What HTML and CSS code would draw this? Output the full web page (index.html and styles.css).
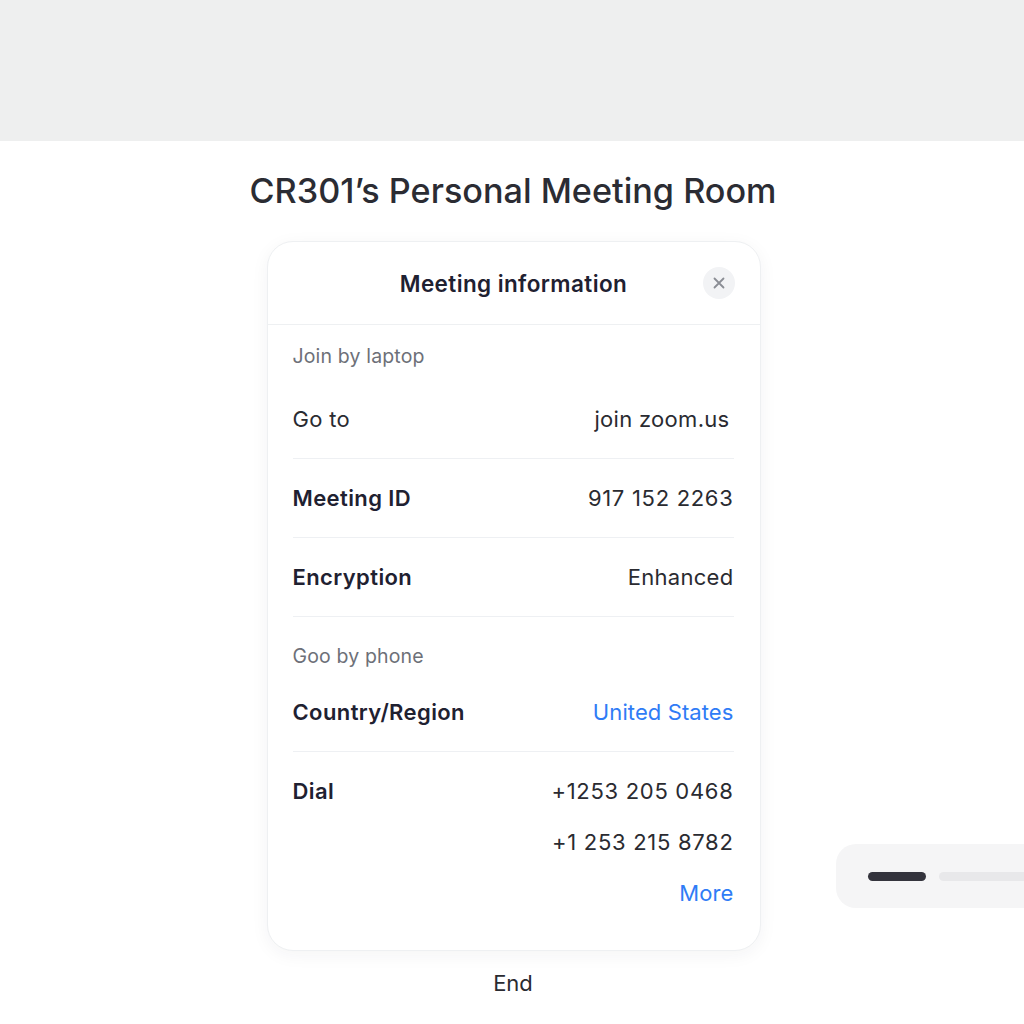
FILE: index.html
```html
<!DOCTYPE html>
<html lang="en">
<head>
<meta charset="utf-8">
<title>CR301's Personal Meeting Room</title>
<link rel="stylesheet" href="styles.css">
</head>
<body>
<div class="topbar"></div>
<main class="page">
  <h1 class="room-title">CR301’s Personal Meeting Room</h1>
  <section class="card">
    <header class="card-head">
      <h2 class="card-title">Meeting information</h2>
      <button class="close" aria-label="Close">
        <svg width="14" height="14" viewBox="0 0 14 14"><path d="M2.5 2.5 L11.5 11.5 M11.5 2.5 L2.5 11.5" stroke="#8a8d94" stroke-width="1.8" stroke-linecap="round"/></svg>
      </button>
    </header>
    <div class="card-body">
      <div class="label first">Join by laptop</div>
      <div class="row">
        <span class="key plain">Go to</span>
        <span class="val inset">join zoom.us</span>
      </div>
      <div class="row">
        <span class="key">Meeting ID</span>
        <span class="val num">917 152 2263</span>
      </div>
      <div class="row">
        <span class="key">Encryption</span>
        <span class="val">Enhanced</span>
      </div>
      <div class="label second">Goo by phone</div>
      <div class="row">
        <span class="key">Country/Region</span>
        <span class="val link">United States</span>
      </div>
      <div class="dial">
        <span class="key">Dial</span>
        <div class="numbers">
          <span class="val num">+1253 205 0468</span>
          <span class="val num">+1 253 215 8782</span>
          <span class="val link">More</span>
        </div>
      </div>
    </div>
  </section>
  <div class="end">End</div>
</main>
<div class="slider">
  <span class="bar dark"></span>
  <span class="bar light"></span>
</div>
</body>
</html>
```

FILE: styles.css
```css
* { box-sizing: border-box; }
html, body { margin: 0; padding: 0; }
body {
  background: #ffffff;
  font-family: Inter, "Noto Sans", sans-serif;
  color: #2a2b31;
  width: 1024px;
  height: 1024px;
  overflow: hidden;
  position: relative;
}
.topbar {
  height: 141px;
  background: #eeefef;
}
.page {
  display: flex;
  flex-direction: column;
  align-items: center;
}
.room-title {
  margin: 30px 0 0;
  font-size: 34.2px;
  font-weight: 500;
  line-height: 40px;
  color: #2b2c33;
  letter-spacing: 0;
  transform: translateX(1px);
}
.card {
  margin-top: 30px;
  width: 494px;
  background: #fff;
  border: 1px solid #eef0f2;
  border-radius: 26px;
  box-shadow: 0 4px 18px rgba(30, 40, 60, 0.05);
  margin-left: 3px;
}
.card-head {
  height: 83px;
  border-bottom: 1px solid #eef0f2;
  display: flex;
  align-items: center;
  justify-content: center;
  position: relative;
}
.card-title {
  margin: 0;
  font-size: 22.5px;
  font-weight: 600;
  color: #1f2131;
  letter-spacing: 0.4px;
}
.close {
  position: absolute;
  right: 25px;
  top: 25px;
  width: 32px;
  height: 32px;
  border: none;
  border-radius: 50%;
  background: #f2f3f5;
  display: flex;
  align-items: center;
  justify-content: center;
  padding: 0;
}
.card-body {
  padding: 0 26px 45px 25px;
}
.label {
  font-size: 19.5px;
  line-height: 24px;
  color: #6d7078;
  letter-spacing: 0.15px;
}
.label.first { margin-top: 19px; margin-bottom: 12px; }
.label.second { margin-top: 27px; margin-bottom: 5px; }
.row {
  height: 79px;
  border-bottom: 1px solid #eef0f3;
  display: flex;
  align-items: center;
  justify-content: space-between;
}
.key {
  font-size: 22px;
  font-weight: 600;
  color: #1f2131;
  letter-spacing: 0.4px;
  line-height: 26px;
}
.key.plain {
  font-weight: 400;
  color: #2a2b31;
  letter-spacing: 0.3px;
}
.val {
  font-size: 22px;
  font-weight: 400;
  color: #2a2b31;
  line-height: 24px;
  letter-spacing: 0.3px;
}
.val.num { letter-spacing: 0.7px; }
.val.inset { margin-right: 4px; }
.val.link { color: #2f7cf6; letter-spacing: 0.1px; }
.dial {
  display: flex;
  justify-content: space-between;
  align-items: flex-start;
  padding-top: 27px;
}
.dial .key { line-height: 24px; }
.numbers {
  display: flex;
  flex-direction: column;
  align-items: flex-end;
  gap: 27px;
}
.end {
  margin-top: 19px;
  font-size: 22px;
  line-height: 26px;
  color: #2a2b31;
  transform: translateX(1px);
}
.slider {
  position: absolute;
  left: 836px;
  top: 844px;
  width: 220px;
  height: 64px;
  background: #f5f5f6;
  border-radius: 20px;
  display: flex;
  align-items: center;
  gap: 13px;
  padding-left: 32px;
}
.bar {
  height: 9px;
  border-radius: 5px;
  display: block;
}
.bar.dark { width: 60px; background: #34343d; }
.bar.light { width: 120px; background: #e8e8ea; }
```
